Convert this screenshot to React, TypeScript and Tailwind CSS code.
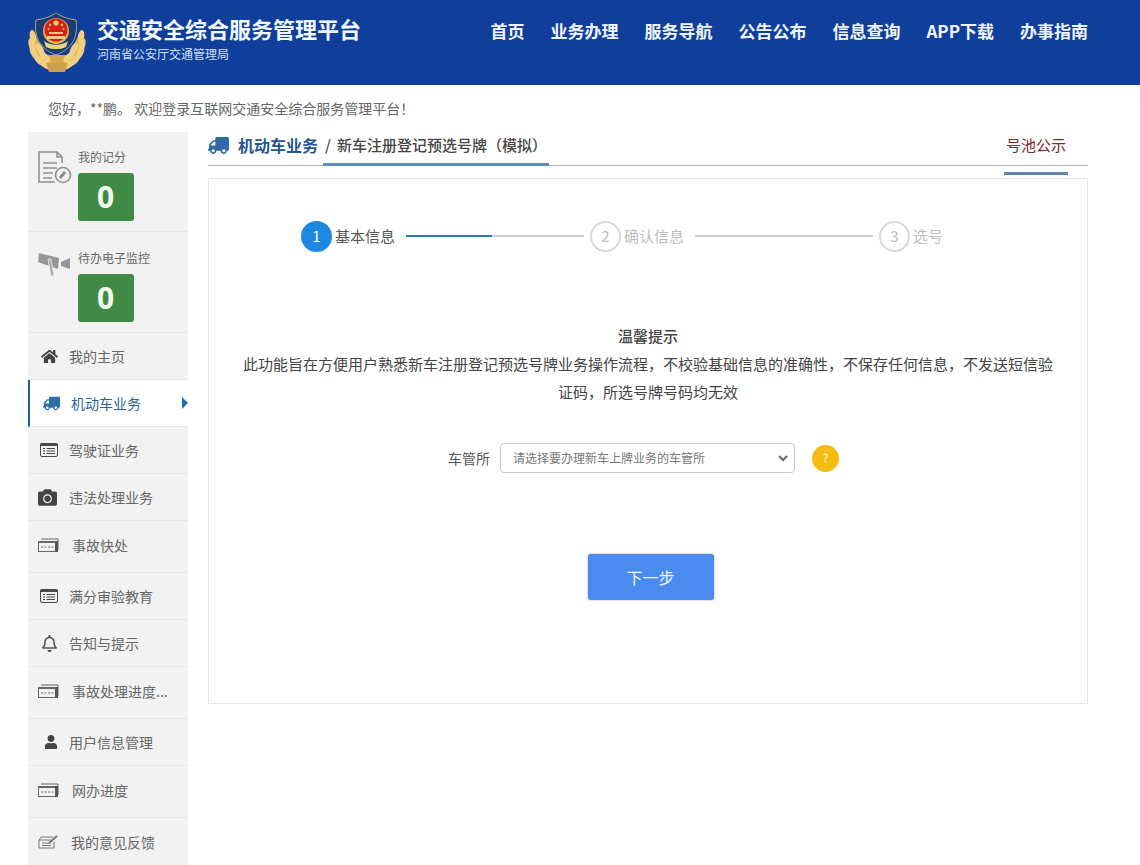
import type { ReactNode } from "react";
import { FaCamera, FaHome, FaRegBell, FaTruck, FaUser } from "react-icons/fa";

const navItems = ["首页", "业务办理", "服务导航", "公告公布", "信息查询", "APP下载", "办事指南"];

const leaves = [
  [5, 24, -10],
  [4, 32, -16],
  [6, 40, -28],
  [11, 47, -42],
  [18, 52, -60],
  [12, 36, -30],
  [17, 44, -50],
];

function Emblem() {
  return (
    <svg width="58" height="60" viewBox="0 0 58 60">
      {/* wheat wreath, drawn on one side and mirrored */}
      <path d="M7 22 C1 34 5 48 17 55 C21 57 26 59 29 59 C32 59 37 57 41 55 C53 48 57 34 51 22 L40 42 L18 42Z" fill="#d8a850" />
      {leaves.map(([x, y, r]) => (
        <g key={`${x}-${y}`}>
          <ellipse cx={x} cy={y} rx="3.200" ry="7" fill="#f0cf7f" transform={`rotate(${r} ${x} ${y})`} />
          <ellipse cx={58 - x} cy={y} rx="3.200" ry="7" fill="#f0cf7f" transform={`rotate(${-r} ${58 - x} ${y})`} />
        </g>
      ))}
      <path d="M18 50h22l-3 9h-16z" fill="#cf9f4c" />
      {/* shield */}
      <path d="M28 0 C34 4 41 6 48 7 C50 22 46 35 28 42 C10 35 6 22 8 7 C15 6 22 4 28 0Z" fill="#1c3c78" stroke="#a9a38a" strokeWidth="1" />
      <circle cx="28" cy="18" r="13" fill="#e2b64f" />
      <circle cx="28" cy="17" r="11.500" fill="#d5201d" />
      <circle cx="28" cy="10" r="2.600" fill="#f4cf4c" />
      <circle cx="22" cy="12" r="1.200" fill="#f4cf4c" />
      <circle cx="34" cy="12" r="1.200" fill="#f4cf4c" />
      <circle cx="20.500" cy="16" r="1" fill="#f4cf4c" />
      <circle cx="35.500" cy="16" r="1" fill="#f4cf4c" />
      <path d="M21 19h14v2H21zM19 23h18v3H19z" fill="#f0cf7f" />
      <path d="M16 28 C22 33 34 33 40 28 L38 34 C32 37 24 37 18 34Z" fill="#f0d37f" />
    </svg>
  );
}

function ScoreIcon() {
  return (
    <svg width="34" height="34" viewBox="0 0 34 34" fill="none" stroke="#8f8f8f" strokeWidth="1.600">
      <path d="M24 12V6l-5-5H1v30h16" />
      <path d="M19 1v5h5" />
      <path d="M5 12h14M5 17h14M5 22h10M5 27h9" />
      <circle cx="25" cy="24" r="7.500" fill="#f2f2f2" />
      <path d="M22 27l5-6" strokeWidth="3" />
    </svg>
  );
}

function MonitorIcon() {
  return (
    <svg width="33" height="26" viewBox="0 0 33 26" fill="#969696">
      <path d="M1 2l20 5-1 11L0 11z" />
      <path d="M23 11l9-4v11l-9-3z" />
      <path d="M10 8h3l3 17h-3z" fill="#a8a8a8" stroke="#f2f2f2" strokeWidth="0.800" />
    </svg>
  );
}

function ListIcon() {
  return (
    <svg width="18" height="14" viewBox="0 0 18 14">
      <rect x="0.500" y="0.500" width="17" height="13" rx="1.500" fill="#f2f2f2" stroke="#4a4a4a" />
      <rect x="0.500" y="0.500" width="17" height="2.500" fill="#4a4a4a" />
      <path d="M3 5.500h2M6.500 5.500h8.500M3 8h2M6.500 8h8.500M3 10.500h2M6.500 10.500h8.500" stroke="#4a4a4a" strokeWidth="1.200" />
    </svg>
  );
}

function CardIcon() {
  return (
    <svg width="21" height="14" viewBox="0 0 21 14">
      <path d="M3 1h17v11" fill="none" stroke="#666" />
      <rect x="0.500" y="3.500" width="19" height="10" fill="#f2f2f2" stroke="#666" />
      <path d="M0 3h20v2H0z" fill="#666" />
      <rect x="17" y="3" width="3" height="11" fill="#555" />
      <path d="M3 9h2M6.500 9h2M10 9h2M13.500 9h2" stroke="#666" strokeWidth="1.200" />
    </svg>
  );
}

function FeedbackIcon() {
  return (
    <svg width="21" height="14" viewBox="0 0 21 14" fill="none" stroke="#777">
      <path d="M15 2H3L1 5v8h15V7" />
      <path d="M1 5h12M4 8h9M4 10.500h9" />
      <path d="M11 8l8-7" strokeWidth="2" />
    </svg>
  );
}

type MenuItem = {
  label: string;
  icon: ReactNode;
  row: string;
  iconBox: string;
  active?: boolean;
};

const menu: MenuItem[] = [
  { label: "我的主页", icon: <FaHome size={17} color="#444" />, row: "h-[47px] border-b", iconBox: "w-[41px] pl-[13px]" },
  { label: "机动车业务", icon: <FaTruck size={17} color="#2f6fa8" className="-scale-x-100" />, row: "h-[47px] border-b", iconBox: "w-[41px] pl-[13px]", active: true },
  { label: "驾驶证业务", icon: <ListIcon />, row: "h-[47px] border-b", iconBox: "w-[41px] pl-[12px]" },
  { label: "违法处理业务", icon: <FaCamera size={19} color="#444" />, row: "h-[47px] border-b", iconBox: "w-[41px] pl-[10px]" },
  { label: "事故快处", icon: <CardIcon />, row: "h-[52px] border-b pb-[3px]", iconBox: "w-[44px] pl-[10px]" },
  { label: "满分审验教育", icon: <ListIcon />, row: "h-[47px] border-b", iconBox: "w-[41px] pl-[12px]" },
  { label: "告知与提示", icon: <FaRegBell size={17} color="#555" />, row: "h-[47px] border-b", iconBox: "w-[41px] pl-[13px]" },
  { label: "事故处理进度...", icon: <CardIcon />, row: "h-[52px] border-b pb-[3px]", iconBox: "w-[44px] pl-[10px]" },
  { label: "用户信息管理", icon: <FaUser size={14} color="#444" />, row: "h-[47px] border-b", iconBox: "w-[41px] pl-[16px]" },
  { label: "网办进度", icon: <CardIcon />, row: "h-[52px] border-b pb-[3px]", iconBox: "w-[44px] pl-[10px]" },
  { label: "我的意见反馈", icon: <FeedbackIcon />, row: "h-[48px]", iconBox: "w-[43px] pl-[10px]" },
];

function ScoreCard({ icon, label, tall }: { icon: ReactNode; label: string; tall?: boolean }) {
  return (
    <div className={`flex border-b border-[#e6e6e6] ${tall ? "h-[101px]" : "h-[100px]"}`}>
      <div className="w-[50px] pl-[10px] pt-[19px]">{icon}</div>
      <div className={tall ? "pt-[18px]" : "pt-[17px]"}>
        <div className="text-[12px] leading-[16px] text-[#666] whitespace-nowrap">{label}</div>
        <div className="mt-[8px] flex h-[48px] w-[56px] items-center justify-center rounded-[3px] bg-[#3f8a45] pr-[1px] pb-[1px] text-[30px] font-bold text-[#f2fbf0] font-['Open_Sans',sans-serif]">
          0
        </div>
      </div>
    </div>
  );
}

function Step({ n, label, active }: { n: number; label: string; active?: boolean }) {
  return (
    <div className="flex items-center">
      <div
        className={`flex h-[31px] w-[31px] items-center justify-center rounded-full text-[15px] ${
          active ? "bg-[#1d88e0] text-white" : "border-2 border-[#d9d9d9] text-[#bdbdbd]"
        }`}
      >
        {n}
      </div>
      <span className={`ml-[3px] whitespace-nowrap text-[15px] ${active ? "text-[#555]" : "text-[#bdbdbd]"}`}>{label}</span>
    </div>
  );
}

export default function App() {
  return (
    <div className="h-[865px] w-[1140px] overflow-hidden bg-white font-['Noto_Sans_CJK_SC','Noto_Sans_CJK_JP',sans-serif]">
      <header className="flex h-[85px] items-center bg-[#0f3f9a] pl-[28px] pr-[52px]">
        <Emblem />
        <div className="ml-[11px] -mt-[10px]">
          <div className="text-[22px] font-bold leading-[30px] text-[#f2f8ff] whitespace-nowrap">交通安全综合服务管理平台</div>
          <div className="mt-[2px] text-[12px] leading-[18px] text-[#cfe0f5] whitespace-nowrap">河南省公安厅交通管理局</div>
        </div>
        <nav className="ml-auto -mt-[23px] flex gap-[26px]">
          {navItems.map((item) => (
            <span key={item} className="text-[17px] font-bold whitespace-nowrap text-[#f2f6fc]">
              {item}
            </span>
          ))}
        </nav>
      </header>

      <div className="flex h-[47px] items-center pl-[48px] text-[14px] text-[#666] whitespace-nowrap">
        您好，**鹏。 欢迎登录互联网交通安全综合服务管理平台！
      </div>

      <div className="flex gap-[20px] pl-[28px]">
        <aside className="w-[160px] bg-[#f2f2f2]">
          <ScoreCard icon={<ScoreIcon />} label="我的记分" />
          <ScoreCard icon={<MonitorIcon />} label="待办电子监控" tall />
          {menu.map((m) => (
            <div
              key={m.label}
              className={`flex items-center border-[#e6e6e6] ${m.row} ${
                m.active ? "border-l-2 border-l-[#1f5f96] bg-white" : ""
              }`}
            >
              <div className={`shrink-0 ${m.iconBox}`}>{m.icon}</div>
              <span className={`whitespace-nowrap text-[14px] ${m.active ? "text-[#2a6496]" : "text-[#666]"}`}>{m.label}</span>
              {m.active && <span className="ml-auto h-0 w-0 border-y-[6px] border-l-[6px] border-y-transparent border-l-[#1f6fb0]" />}
            </div>
          ))}
        </aside>

        <main className="w-[880px]">
          <div className="relative flex h-[34px] items-center border-b border-[#a9b4c0] pb-[7px]">
            <FaTruck size={21} color="#2f6aa6" className="-scale-x-100" />
            <span className="ml-[9px] text-[16px] font-bold text-[#24568f]">机动车业务</span>
            <span className="ml-[7px] text-[15px] font-medium text-[#444]">/</span>
            <span className="ml-[6px] text-[15px] font-medium whitespace-nowrap text-[#444]">新车注册登记预选号牌（模拟）</span>
            <div className="absolute bottom-[-1px] left-[115px] h-[3px] w-[226px] bg-[#5d8cc3]" />
            <span className="absolute right-[22px] top-[0px] text-[15px] leading-[26px] text-[#7b2a2a]">号池公示</span>
            <div className="absolute bottom-[-10px] right-[20px] h-[3px] w-[64px] bg-[#5f86ad]" />
          </div>

          <section className="mt-[12px] h-[526px] border border-[#e4e4e4] px-[34px]">
            <div className="flex h-[114px] items-center pl-[58px]">
              <Step n={1} label="基本信息" active />
              <div className="ml-[11px] flex h-[2px] w-[178px] bg-[#cfcfcf]">
                <div className="h-full w-[86px] bg-[#2f7bb0]" />
              </div>
              <div className="ml-[6px]">
                <Step n={2} label="确认信息" />
              </div>
              <div className="ml-[11px] h-[2px] w-[178px] bg-[#cfcfcf]" />
              <div className="ml-[6px]">
                <Step n={3} label="选号" />
              </div>
            </div>

            <div className="mt-[29px] text-center text-[15px] leading-[28px] text-[#444]">
              <div className="font-medium">温馨提示</div>
              <p>
                此功能旨在方便用户熟悉新车注册登记预选号牌业务操作流程，不校验基础信息的准确性，不保存任何信息，不发送短信验证码，所选号牌号码均无效
              </p>
            </div>

            <div className="mt-[37px] flex items-center pl-[205px]">
              <span className="text-[14px] text-[#555]">车管所</span>
              <div className="ml-[10px] flex h-[30px] w-[295px] items-center justify-between rounded-[4px] border border-[#c8c8c8] pl-[12px] pr-[6px]">
                <span className="text-[12px] text-[#777]">请选择要办理新车上牌业务的车管所</span>
                <svg width="10" height="8" viewBox="0 0 10 8" fill="none" stroke="#666" strokeWidth="2">
                  <path d="M1 2l4 4 4-4" />
                </svg>
              </div>
              <div className="ml-[17px] flex h-[27px] w-[27px] items-center justify-center rounded-full bg-[#f5bd14] text-[12px] font-bold text-[#f9e9a0]">?</div>
            </div>

            <div className="mt-[81px] flex justify-center">
              <button className="ml-[5px] h-[46px] w-[126px] rounded-[3px] bg-[#4b8bf0] text-[16px] text-[#eef5ff] shadow-[0_0_2px_rgba(40,90,160,0.6)]">下一步</button>
            </div>
          </section>
        </main>
      </div>
    </div>
  );
}
